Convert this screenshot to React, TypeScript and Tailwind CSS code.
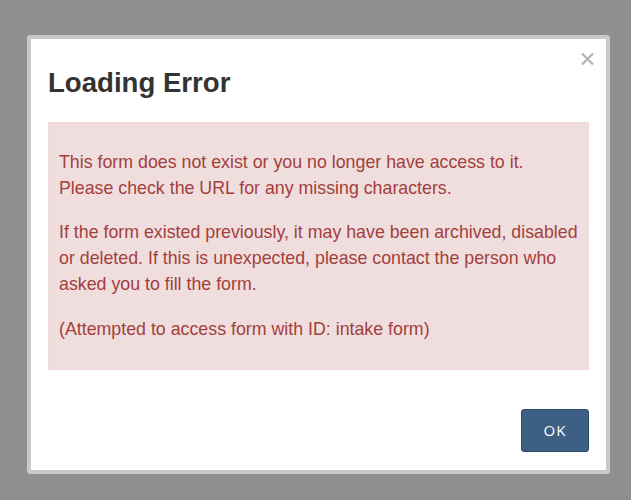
export default function App() {
  return (
    <div className="flex h-[500px] w-[631px] items-start justify-start bg-[#8f8f8f] pl-[27px] pt-[35px]">
      <div className="flex h-[439px] w-[583px] flex-col rounded-[3px] border-4 border-[#c9c9c9] bg-white">
        <div className="relative px-[17px] pt-[24px]">
          <h1
            className="text-[27.6px] font-bold leading-[40px] text-[#333]"
            style={{ fontFamily: '"Liberation Sans", Arial, sans-serif' }}
          >
            Loading Error
          </h1>
          <button className="absolute right-[12px] top-[14px] flex h-[12px] w-[13px] items-center justify-center">
            <svg width="13" height="12" viewBox="0 0 13 12">
              <path d="M1 0.5 L12 11.5 M12 0.5 L1 11.5" stroke="#b3b3b3" strokeWidth="2.2" />
            </svg>
          </button>
        </div>

        <div
          className="mx-[17px] mt-[19px] h-[248px] border border-[#efdada] bg-[#f0dede] pl-[10px] pr-[2px] pt-[26px] text-[17.8px] leading-[26px] text-[#a3403c]"
          style={{ fontFamily: '"Liberation Sans", Arial, sans-serif' }}
        >
          <p>
            This form does not exist or you no longer have access to it.
            <br />
            Please check the URL for any missing characters.
          </p>
          <p className="mt-[18px]">
            If the form existed previously, it may have been archived, disabled or deleted. If this
            is unexpected, please contact the person who asked you to fill the form.
          </p>
          <p className="mt-[19px]">(Attempted to access form with ID: intake form)</p>
        </div>

        <div className="flex justify-end px-[17px] pt-[39px]">
          <button
            className="h-[43px] w-[68px] rounded-[3px] border border-[#2e4d6e] bg-[#3d5f83] text-[15px] tracking-[1px] text-white"
            style={{ fontFamily: '"Open Sans", sans-serif' }}
          >
            OK
          </button>
        </div>
      </div>
    </div>
  );
}
